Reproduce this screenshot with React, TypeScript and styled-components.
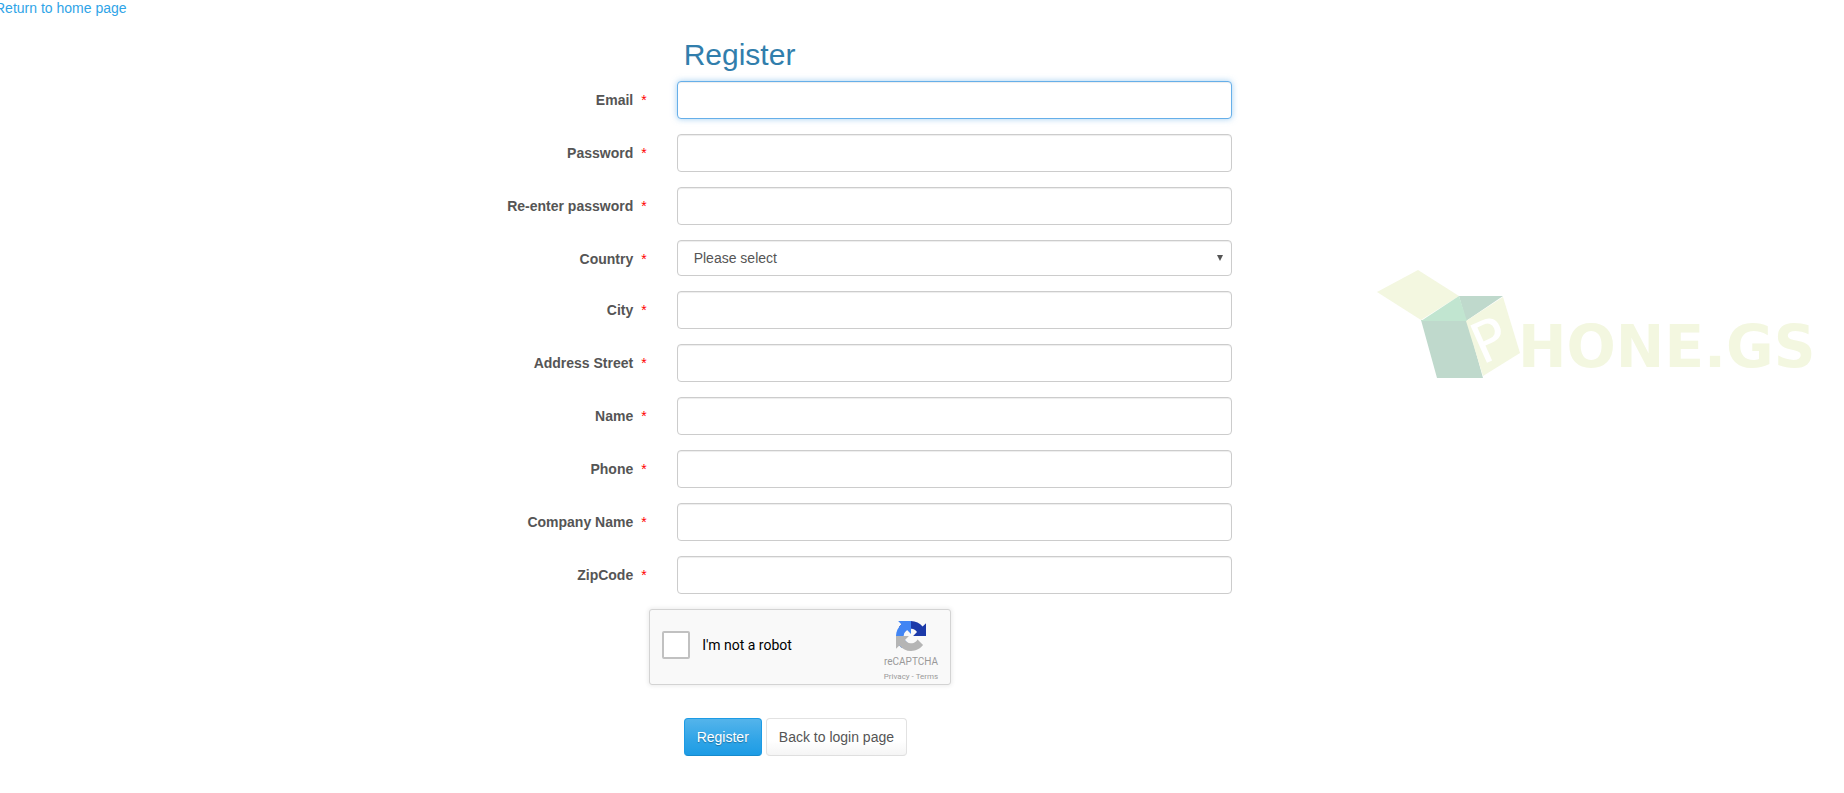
import React from "react";
import styled, { createGlobalStyle, css } from "styled-components";

const GlobalStyle = createGlobalStyle`
  *, *::before, *::after { box-sizing: border-box; }
  body {
    margin: 0;
    overflow-x: hidden;
    background: #fff;
    color: #555;
    font: 14px/20px "Liberation Sans", Arial, sans-serif;
  }
`;

const TopBar = styled.nav`
  height: 38px;
  margin-left: -5px;
  line-height: 16px;
`;

const HomeLink = styled.a`
  color: #2fa4e7;
  text-decoration: none;
`;

const Main = styled.main`
  display: grid;
  grid-template-columns: 66.8% 1fr;
`;

const Form = styled.form`
  display: flex;
  flex-direction: column;
  gap: 15px;
`;

const Row = styled.div`
  display: grid;
  grid-template-columns: 52.5% 1fr;
  column-gap: 30px;
`;

const Title = styled.h1`
  grid-column: 2;
  margin: 0 0 -5px 7px;
  color: #317eac;
  font-size: 30px;
  font-weight: 400;
  line-height: 33px;
`;

const Label = styled.label`
  display: flex;
  justify-content: flex-end;
  gap: 8px;
  padding-top: 9px;
  font-weight: 700;
`;

const Required = styled.span`
  color: #f00;
  font-weight: 400;
`;

const control = css`
  width: 100%;
  border: 1px solid #ccc;
  border-radius: 4px;
  background: #fff;
  color: #555;
  font: inherit;
  outline: none;
  box-shadow: inset 0 1px 1px rgba(0, 0, 0, 0.075);
`;

const Input = styled.input<{ $active?: boolean }>`
  ${control}
  height: 38px;
  padding: 8px 12px;
  ${({ $active }) =>
    $active &&
    css`
      border-color: #66afe9;
      box-shadow: inset 0 1px 1px rgba(0, 0, 0, 0.075), 0 0 6px rgba(102, 175, 233, 0.6);
    `}
`;

const SelectBox = styled.div`
  position: relative;
`;

const Select = styled.select`
  ${control}
  display: block;
  height: 36px;
  padding: 0 16px;
  appearance: none;
`;

const Arrow = styled.svg`
  position: absolute;
  top: 15px;
  right: 9px;
  pointer-events: none;
`;

const Indent = styled.div`
  padding-left: 52.7%;
`;

const Captcha = styled.div`
  display: flex;
  justify-content: space-between;
  width: 302px;
  height: 76px;
  padding: 0 12px;
  border: 1px solid #d3d3d3;
  border-radius: 3px;
  background: #f9f9f9;
  box-shadow: 0 0 4px 1px rgba(0, 0, 0, 0.08);
  font-family: Roboto, sans-serif;
`;

const RobotLabel = styled.label`
  display: flex;
  align-items: center;
  gap: 12px;
  height: 70px;
  color: #000;
`;

const Tick = styled.input`
  appearance: none;
  width: 28px;
  height: 28px;
  margin: 0;
  border: 2px solid #c1c1c1;
  border-radius: 2px;
  background: #fff;
`;

const Brand = styled.div`
  display: flex;
  flex-direction: column;
  align-items: center;
  padding-top: 11px;
  color: #999;
  font-size: 10px;
  line-height: 22px;
`;

const Legal = styled.div`
  font-size: 8px;
  line-height: 8px;

  a {
    color: inherit;
    text-decoration: none;
  }
`;

const Actions = styled.div`
  display: flex;
  grid-column: 2;
  gap: 4px;
  margin: 18px 0 0 7px;
`;

const Button = styled.button<{ $primary?: boolean }>`
  height: 38px;
  padding: 0 12px;
  border: 1px solid ${({ $primary }) => ($primary ? "#1c9be5" : "#e2e2e2")};
  border-bottom-color: ${({ $primary }) => ($primary ? "#178acc" : "#dfdfdf")};
  border-radius: 4px;
  background: ${({ $primary }) =>
    $primary
      ? "linear-gradient(#54b4eb, #2fa4e7 60%, #1d9ce5)"
      : "linear-gradient(#fff, #fff 60%, #f5f5f5)"};
  color: ${({ $primary }) => ($primary ? "#fff" : "#555")};
  font: inherit;
  text-shadow: ${({ $primary }) => ($primary ? "0 1px 1px rgba(0, 0, 0, 0.3)" : "none")};
`;

const Aside = styled.aside`
  padding: 232px 0 0 145px;
`;

const LogoSvg = styled.svg`
  display: block;
`;

const RecaptchaIcon = () => (
  <svg width="30" height="30" viewBox="0 0 64 64" aria-hidden="true">
    <path
      fill="#1c3aa9"
      d="M64 32V4.6l-7.2 7.2C50.9 4.6 41.9 0 31.9 0 21.5 0 12.2 5 6.3 12.7l11.8 11.9c1.2-2.1 2.8-4 4.8-5.4 2.1-1.6 5-2.9 9-2.9.5 0 .9.1 1.1.2 5 .4 9.3 3.1 11.8 7.1L36.5 32z"
    />
    <path
      fill="#4285f4"
      d="M32 0H4.6l7.2 7.2C4.6 13.1 0 22.1 0 32.1c0 10.4 5 19.7 12.7 25.6l11.9-11.8c-2.1-1.2-4-2.8-5.4-4.8-1.6-2.1-2.9-5-2.9-9 0-.5.1-.9.2-1.1.4-5 3.1-9.3 7.1-11.8L32 27.5z"
    />
    <path
      fill="#b5b5b5"
      d="M0 32v27.4l7.2-7.2C13.1 59.4 22.1 64 32.1 64c10.4 0 19.7-5 25.6-12.7L45.9 39.4c-1.2 2.1-2.8 4-4.8 5.4-2.1 1.6-5 2.9-9 2.9-.5 0-.9-.1-1.1-.2-5-.4-9.3-3.1-11.8-7.1l8.3-8.4z"
    />
  </svg>
);

const Logo = () => (
  <LogoSvg width="456" height="110" viewBox="0 0 456 110" role="img" aria-label="Phone.gs">
    <path fill="#f3f7e0" d="M0 22 41 0l41 26-38 24z" />
    <path fill="#bfd9cc" d="M82 26h44L89 51zM44 50h46l16 58H60z" />
    <path fill="#c1e5d0" d="M82 26 44 51h46z" />
    <path fill="#f3f7e0" d="m126 27 17 56-37 23-17-55z" />
    <text
      transform="translate(105 95) rotate(-24)"
      fill="#fff"
      fontFamily="DejaVu Sans, sans-serif"
      fontSize="56"
    >
      P
    </text>
    <text
      x="141"
      y="97"
      fill="#f3f7e0"
      fontFamily="DejaVu Sans, sans-serif"
      fontSize="58"
      fontWeight="700"
    >
      HONE.GS
    </text>
  </LogoSvg>
);

interface Field {
  id: string;
  label: string;
  type?: string;
  options?: string[];
  active?: boolean;
}

const fields: Field[] = [
  { id: "email", label: "Email", type: "email", active: true },
  { id: "password", label: "Password", type: "password" },
  { id: "confirm", label: "Re-enter password", type: "password" },
  { id: "country", label: "Country", options: ["Please select"] },
  { id: "city", label: "City" },
  { id: "street", label: "Address Street" },
  { id: "name", label: "Name" },
  { id: "phone", label: "Phone", type: "tel" },
  { id: "company", label: "Company Name" },
  { id: "zip", label: "ZipCode" },
];

const FieldRow = ({ id, label, type = "text", options, active }: Field) => (
  <Row>
    <Label htmlFor={id}>
      {label}
      <Required>*</Required>
    </Label>
    {options ? (
      <SelectBox>
        <Select id={id}>
          {options.map((option) => (
            <option key={option}>{option}</option>
          ))}
        </Select>
        <Arrow width="6" height="6" viewBox="0 0 6 6" aria-hidden="true">
          <path d="M0 0h6L3 6z" fill="#555" />
        </Arrow>
      </SelectBox>
    ) : (
      <Input id={id} type={type} $active={active} />
    )}
  </Row>
);

export default function App() {
  return (
    <>
      <GlobalStyle />
      <TopBar>
        <HomeLink href="#home">Return to home page</HomeLink>
      </TopBar>
      <Main>
        <Form onSubmit={(event) => event.preventDefault()}>
          <Row>
            <Title>Register</Title>
          </Row>
          {fields.map((field) => (
            <FieldRow key={field.id} {...field} />
          ))}
          <Indent>
            <Captcha>
              <RobotLabel>
                <Tick type="checkbox" />
                I'm not a robot
              </RobotLabel>
              <Brand>
                <RecaptchaIcon />
                reCAPTCHA
                <Legal>
                  <a href="#privacy">Privacy</a> - <a href="#terms">Terms</a>
                </Legal>
              </Brand>
            </Captcha>
          </Indent>
          <Row>
            <Actions>
              <Button type="submit" $primary>
                Register
              </Button>
              <Button type="button">Back to login page</Button>
            </Actions>
          </Row>
        </Form>
        <Aside>
          <Logo />
        </Aside>
      </Main>
    </>
  );
}
